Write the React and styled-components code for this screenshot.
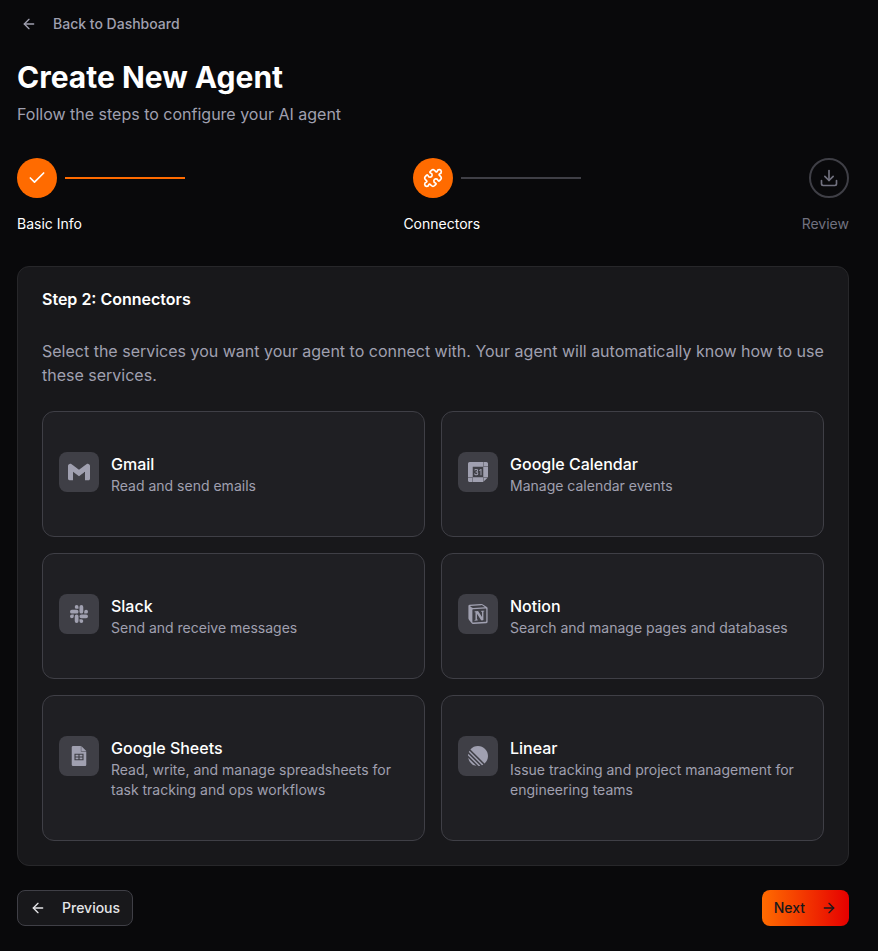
import React from "react";
import styled, { createGlobalStyle } from "styled-components";
import { ArrowLeft, ArrowRight, Check, Puzzle, Download } from "lucide-react";
import { SiGmail, SiGooglecalendar, SiSlack, SiNotion, SiGooglesheets, SiLinear } from "react-icons/si";

const Global = createGlobalStyle`
  * { box-sizing: border-box; }
  html, body { margin: 0; background: #09090b; }
  body { font-family: Inter, "Liberation Sans", sans-serif; color: #fafafa; }
`;

const Page = styled.div`
  padding: 6px 29px 25px 17px;
  min-height: 951px;
`;

const BackLink = styled.a`
  display: flex;
  align-items: center;
  gap: 16px;
  height: 36px;
  padding-left: 4px;
  font-size: 14px;
  line-height: 20px;
  font-weight: 500;
  color: #a0a0b0;
`;

const Header = styled.header`
  margin-top: 17px;
`;

const Title = styled.h1`
  margin: 0;
  font-size: 30px;
  line-height: 36px;
  font-weight: 700;
  color: #fff;
`;

const Subtitle = styled.p`
  margin: 7px 0 0;
  font-size: 16px;
  line-height: 24px;
  color: #a0a0b0;
`;

const StepRow = styled.div`
  display: flex;
  justify-content: space-between;
  margin-top: 32px;
`;

const Step = styled.div`
  display: flex;
  align-items: center;
  gap: 8px;
`;

const StepCircle = styled.div`
  width: 40px;
  height: 40px;
  border-radius: 50%;
  display: flex;
  align-items: center;
  justify-content: center;
  background: ${(p) => (p.$active ? "#ff6b00" : "transparent")};
  border: ${(p) => (p.$active ? "none" : "2px solid #3f3f46")};
  color: ${(p) => (p.$active ? "#fff" : "#71717f")};
`;

const StepLine = styled.div`
  width: 120px;
  height: 2px;
  background: ${(p) => (p.$done ? "#ff6b00" : "#3f3f46")};
`;

const LabelRow = styled.div`
  display: flex;
  justify-content: space-between;
  margin-top: 16px;
`;

const StepLabel = styled.span`
  font-size: 14px;
  line-height: 20px;
  font-weight: 400;
  color: ${(p) => (p.$muted ? "#71717f" : "#fff")};
`;

const Panel = styled.section`
  margin-top: 32px;
  padding: 24px;
  background: #18181b;
  border: 1px solid #27272a;
  border-radius: 12px;
`;

const PanelTitle = styled.h2`
  margin: 0;
  font-size: 16px;
  line-height: 16px;
  font-weight: 600;
  color: #fff;
`;

const PanelText = styled.p`
  margin: 32px 0 24px;
  font-size: 16px;
  line-height: 24px;
  color: #a0a0b0;
`;

const Grid = styled.div`
  display: grid;
  grid-template-columns: 1fr 1fr;
  gap: 16px;
`;

const Connector = styled.div`
  display: flex;
  align-items: flex-start;
  gap: 12px;
  padding: 40px 16px;
  background: #1f1f23;
  border: 1px solid #3f3f46;
  border-radius: 12px;
`;

const IconBox = styled.div`
  flex: none;
  width: 40px;
  height: 40px;
  border-radius: 8px;
  background: #3f3f46;
  color: #a0a0b0;
  display: flex;
  align-items: center;
  justify-content: center;
`;

const ConnectorName = styled.div`
  font-size: 16px;
  line-height: 24px;
  font-weight: 500;
  color: #fff;
`;

const ConnectorDesc = styled.div`
  font-size: 14px;
  line-height: 20px;
  color: #a0a0b0;
`;

const Footer = styled.footer`
  display: flex;
  justify-content: space-between;
  margin-top: 24px;
`;

const PrevButton = styled.button`
  display: flex;
  align-items: center;
  gap: 16px;
  height: 36px;
  padding: 0 12px;
  font: 500 14px/20px Inter, sans-serif;
  color: #e4e4e7;
  background: #18181b;
  border: 1px solid #3f3f46;
  border-radius: 8px;
`;

const NextButton = styled.button`
  display: flex;
  align-items: center;
  gap: 16px;
  height: 36px;
  padding: 0 12px;
  font: 500 14px/20px Inter, sans-serif;
  color: #18181b;
  background: linear-gradient(to right, #ff6b00, #e60000);
  border: none;
  border-radius: 8px;
`;

const connectors = [
  { name: "Gmail", desc: "Read and send emails", Icon: SiGmail, size: 22 },
  { name: "Google Calendar", desc: "Manage calendar events", Icon: SiGooglecalendar, size: 20 },
  { name: "Slack", desc: "Send and receive messages", Icon: SiSlack, size: 18 },
  { name: "Notion", desc: "Search and manage pages and databases", Icon: SiNotion, size: 20 },
  { name: "Google Sheets", desc: "Read, write, and manage spreadsheets for task tracking and ops workflows", Icon: SiGooglesheets, size: 20 },
  { name: "Linear", desc: "Issue tracking and project management for engineering teams", Icon: SiLinear, size: 20 },
];

export default function App() {
  return (
    <Page>
      <Global />
      <BackLink>
        <ArrowLeft size={16} />
        Back to Dashboard
      </BackLink>
      <Header>
        <Title>Create New Agent</Title>
        <Subtitle>Follow the steps to configure your AI agent</Subtitle>
      </Header>
      <StepRow>
        <Step>
          <StepCircle $active><Check size={20} /></StepCircle>
          <StepLine $done />
        </Step>
        <Step>
          <StepCircle $active><Puzzle size={20} /></StepCircle>
          <StepLine />
        </Step>
        <StepCircle><Download size={20} /></StepCircle>
      </StepRow>
      <LabelRow>
        <StepLabel>Basic Info</StepLabel>
        <StepLabel>Connectors</StepLabel>
        <StepLabel $muted>Review</StepLabel>
      </LabelRow>
      <Panel>
        <PanelTitle>Step 2: Connectors</PanelTitle>
        <PanelText>Select the services you want your agent to connect with. Your agent will automatically know how to use these services.</PanelText>
        <Grid>
          {connectors.map(({ name, desc, Icon, size }) => (
            <Connector key={name}>
              <IconBox><Icon size={size} /></IconBox>
              <div>
                <ConnectorName>{name}</ConnectorName>
                <ConnectorDesc>{desc}</ConnectorDesc>
              </div>
            </Connector>
          ))}
        </Grid>
      </Panel>
      <Footer>
        <PrevButton><ArrowLeft size={16} />Previous</PrevButton>
        <NextButton>Next<ArrowRight size={16} /></NextButton>
      </Footer>
    </Page>
  );
}
